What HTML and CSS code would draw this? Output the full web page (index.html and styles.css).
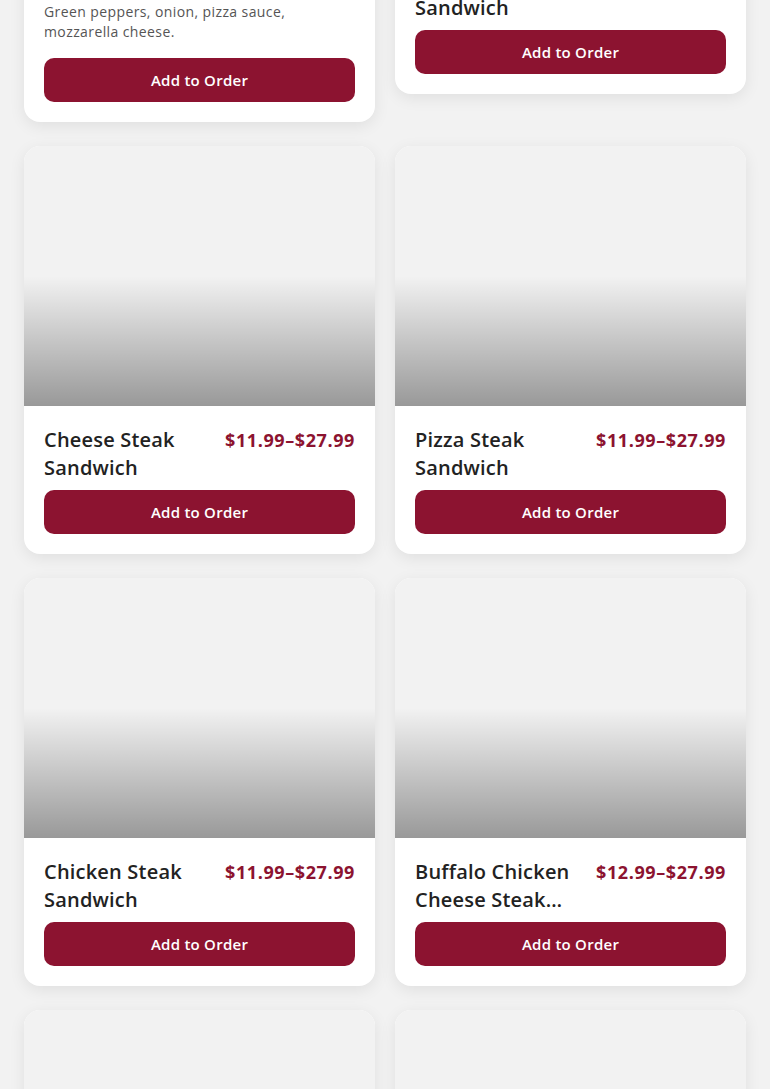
FILE: index.html
```html
<!DOCTYPE html>
<html lang="en">
<head>
  <meta charset="UTF-8">
  <meta name="viewport" content="width=device-width, initial-scale=1.0">
  <title>Menu - Steak Sandwiches</title>
  <link rel="stylesheet" href="styles.css">
</head>
<body>
  <!-- Menu grid (page is scrolled part way down the list) -->
  <main class="menu-grid">
    <div class="card">
      <div class="card-image"></div>
      <div class="card-body">
        <div class="card-head">
          <h3 class="card-title">Pizza Steak</h3>
          <span class="card-price">$11.99–$27.99</span>
        </div>
        <p class="card-desc">Green peppers, onion, pizza sauce, mozzarella cheese.</p>
        <button class="add-btn">Add to Order</button>
      </div>
    </div>

    <div class="card">
      <div class="card-image"></div>
      <div class="card-body">
        <div class="card-head">
          <h3 class="card-title">Pepper Steak Sandwich</h3>
          <span class="card-price">$11.99–$27.99</span>
        </div>
        <button class="add-btn">Add to Order</button>
      </div>
    </div>

    <div class="card">
      <div class="card-image"></div>
      <div class="card-body">
        <div class="card-head">
          <h3 class="card-title">Cheese Steak Sandwich</h3>
          <span class="card-price">$11.99–$27.99</span>
        </div>
        <button class="add-btn">Add to Order</button>
      </div>
    </div>

    <div class="card">
      <div class="card-image"></div>
      <div class="card-body">
        <div class="card-head">
          <h3 class="card-title">Pizza Steak Sandwich</h3>
          <span class="card-price">$11.99–$27.99</span>
        </div>
        <button class="add-btn">Add to Order</button>
      </div>
    </div>

    <div class="card">
      <div class="card-image"></div>
      <div class="card-body">
        <div class="card-head">
          <h3 class="card-title">Chicken Steak Sandwich</h3>
          <span class="card-price">$11.99–$27.99</span>
        </div>
        <button class="add-btn">Add to Order</button>
      </div>
    </div>

    <div class="card">
      <div class="card-image"></div>
      <div class="card-body">
        <div class="card-head">
          <h3 class="card-title">Buffalo Chicken Cheese Steak Sandwich</h3>
          <span class="card-price">$12.99–$27.99</span>
        </div>
        <button class="add-btn">Add to Order</button>
      </div>
    </div>

    <div class="card">
      <div class="card-image"></div>
      <div class="card-body">
        <div class="card-head">
          <h3 class="card-title">Philly Cheese Steak</h3>
          <span class="card-price">$11.99–$27.99</span>
        </div>
        <button class="add-btn">Add to Order</button>
      </div>
    </div>

    <div class="card">
      <div class="card-image"></div>
      <div class="card-body">
        <div class="card-head">
          <h3 class="card-title">Italian Steak Sandwich</h3>
          <span class="card-price">$11.99–$27.99</span>
        </div>
        <button class="add-btn">Add to Order</button>
      </div>
    </div>
  </main>
</body>
</html>
```

FILE: styles.css
```css
body {
  margin: 0;
  background: #f2f2f2;
  font-family: 'Open Sans', 'Liberation Sans', sans-serif;
  color: #222;
}

.menu-grid {
  display: grid;
  grid-template-columns: 1fr 1fr;
  column-gap: 20px;
  row-gap: 24px;
  align-items: start;
  padding: 0 24px 40px;
  margin-top: -314px;
}

.card {
  background: #fff;
  border-radius: 16px;
  overflow: hidden;
  box-shadow: 0 4px 16px rgba(0, 0, 0, 0.08);
}

/* Image placeholder with dark fade at the bottom */
.card-image {
  height: 260px;
  background: linear-gradient(to bottom, rgba(0, 0, 0, 0) 50%, rgba(0, 0, 0, 0.37) 100%), #f2f2f2;
}

.card-body {
  display: flex;
  flex-direction: column;
  gap: 8px;
  padding: 20px;
}

.card-head {
  display: flex;
  justify-content: space-between;
  align-items: flex-start;
  gap: 16px;
}

.card-title {
  margin: 0;
  font-size: 20px;
  font-weight: 600;
  line-height: 28px;
  letter-spacing: 0.2px;
  color: #222;
  display: -webkit-box;
  -webkit-line-clamp: 2;
  -webkit-box-orient: vertical;
  overflow: hidden;
}

.card-price {
  flex: none;
  font-size: 18px;
  font-weight: 700;
  line-height: 28px;
  letter-spacing: 0.6px;
  color: #8c1330;
}

.card-desc {
  margin: 0 0 8px;
  font-size: 14px;
  line-height: 20px;
  letter-spacing: 0.4px;
  color: #555;
}

.add-btn {
  height: 44px;
  border: none;
  border-radius: 10px;
  background: #8c1330;
  color: #fff;
  font-family: inherit;
  font-size: 15px;
  font-weight: 600;
  letter-spacing: 0.25px;
  cursor: pointer;
}
```
